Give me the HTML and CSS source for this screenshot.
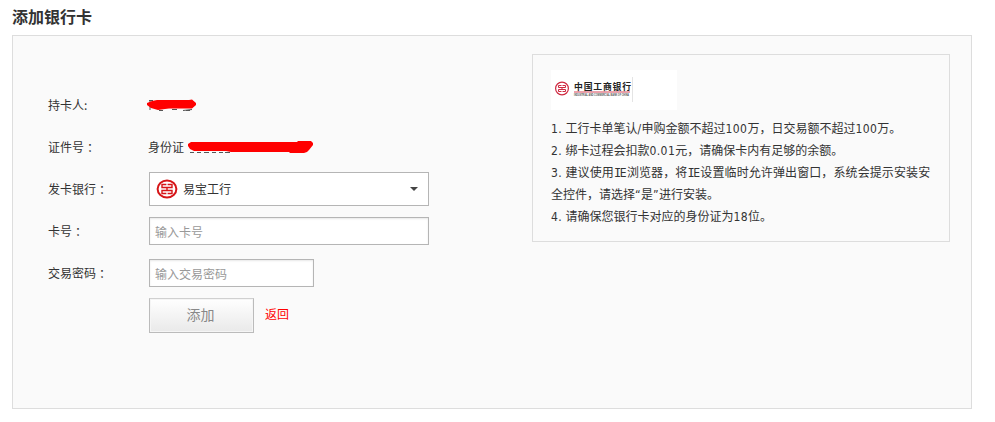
FILE: index.html
```html
<!DOCTYPE html>
<html lang="zh-CN">
<head>
<meta charset="utf-8">
<title>添加银行卡</title>
<link rel="stylesheet" href="styles.css">
</head>
<body>
<h1>添加银行卡</h1>
<main class="panel">
  <form class="form">
    <div class="row"><span class="label">持卡人:</span>
      <svg class="mask-name" width="50" height="14" viewBox="0 0 50 14"><path d="M2 2.500h4M3 3v9M35 2.500h7M36 12.500l9-1M39 12.500h4M12 12.500h4M25 11.500h5" stroke="#555" fill="none"/><path d="M5 3 10 2H42L45 1.500 49 5V7L45 10.500H22L18 11 11 12 4 10 0 7V5z" fill="#f00"/></svg>
    </div>
    <div class="row"><span class="label">证件号<i lang="zh-TW">：</i></span><span class="id">身份证</span>
      <svg class="mask-id" width="126" height="15" viewBox="0 0 126 15"><path d="M2 12.500h4M9 12.500h4M16 12.500h5M24 12.500h4M31 12.500h4M37 12.500h5" stroke="#555"/><path d="M3 2H109L110 1H123L125 3V5L121 10 119 12 116 13H102L101 12H43L38 11H6L2 9 0 6V4z" fill="#f00"/></svg>
    </div>
    <div class="row"><span class="label">发卡银行<i lang="zh-TW">：</i></span>
      <div class="select">
        <svg width="22" height="20" viewBox="0 0 22 20"><ellipse cx="11" cy="10" rx="9.400" ry="8.600" fill="#fff" stroke="#d61518" stroke-width="2"/><path d="M6 5.500H16M6 14.500H16M6 5v3.500H16V5M6 15v-3.500H16V15M11 8v4" fill="none" stroke="#d61518" stroke-width="1.400"/><path d="M11 4v3M11 13v3" stroke="#fff" stroke-width="1.200"/></svg>
        <span>易宝工行</span><b class="caret"></b>
      </div>
    </div>
    <div class="row"><span class="label">卡号<i lang="zh-TW">：</i></span><input class="field" type="text" placeholder="输入卡号"></div>
    <div class="row"><span class="label">交易密码<i lang="zh-TW">：</i></span><input class="field short" type="text" placeholder="输入交易密码"></div>
    <div class="row actions"><button type="button">添加</button><a>返回</a></div>
  </form>
  <aside class="tips">
    <div class="logo">
      <svg width="126" height="40" viewBox="0 0 126 40"><circle cx="11" cy="18.500" r="6.400" fill="none" stroke="#cf2940" stroke-width="1.200"/><path d="M7.500 15.500h7v2h-7zM7.500 19.500h7v2h-7zM11 17v3" fill="none" stroke="#cf2940"/><path d="M11 14.500v2M11 20.500v2" stroke="#fff"/><text class="bank" x="23" y="19.500" textLength="57">中国工商银行</text><path d="M23 22H79" stroke="#d84458"/><text class="bank-en" x="23" y="26" textLength="55" lengthAdjust="spacingAndGlyphs">INDUSTRIAL AND COMMERCIAL BANK OF CHINA</text><path d="M81.500 7v25" stroke="#e4e4e4"/></svg>
    </div>
    <p><span class="no">1.</span>工行卡单笔认<em>/</em>申购金额不超过<em>100</em>万，日交易额不超过<em>100</em>万。</p>
    <p><span class="no">2.</span>绑卡过程会扣款<em>0.01</em>元，请确保卡内有足够的余额。</p>
    <p><span class="no">3.</span><span class="full">建议使用<em><b>I</b>E</em>浏览器，将<em><b>I</b>E</em>设置临时允许弹出窗口，系统会提示安装安</span><br>全控件，请选择<em>“</em>是<em>”</em>进行安装。</p>
    <p><span class="no">4.</span>请确保您银行卡对应的身份证为<em>18</em>位。</p>
  </aside>
</main>
</body>
</html>
```
FILE: styles.css
```css
* { box-sizing: border-box; }
body { margin: 0; background: #fff; color: #333; font: 12px/22px "Noto Sans CJK SC", sans-serif; }
h1 { margin: 0 0 0 12px; height: 35px; padding-top: 5px; font-size: 16px; line-height: 22px; font-weight: 700; }
.panel { width: 960px; height: 374px; margin-left: 12px; padding: 18px 21px 0 35px; border: 1px solid #ddd; background: #fafafa; display: flex; justify-content: space-between; align-items: flex-start; }
.form { padding-top: 30px; width: 400px; }
.row { height: 42px; display: flex; align-items: center; }
.label { width: 101px; flex: none; }
.label i { display: inline-block; line-height: 20px; vertical-align: -1px; font-family: "Noto Sans CJK TC", sans-serif; font-style: normal; }
.row svg { display: block; }
.mask-name { margin-left: -2px; }
.id { margin-left: -1px; }
.mask-id { margin-left: 4px; }
.select { width: 280px; height: 34px; border: 1px solid #b5b5b5; background: #fff; display: flex; align-items: center; padding: 0 10px 0 6px; }
.select span { margin-left: 5px; }
.caret { margin-left: auto; border: 4px solid transparent; border-top-color: #444; border-bottom: 0; }
.field { width: 280px; height: 28px; margin: 0; padding: 0 5px; border: 1px solid #b5b5b5; border-radius: 0; background: #fff; box-shadow: inset 0 1px 2px #e8e8e8; font: inherit; color: #333; outline: 0; }
.short { width: 165px; }
.field::placeholder { color: #999; opacity: 1; }
.actions { padding-left: 101px; height: 43px; }
button { width: 105px; height: 35px; padding: 0 2px 4px 0; border: 1px solid #bbb; border-top-color: #d0d0d0; background: linear-gradient(#fff, #e9e9e9); box-shadow: inset 0 0 0 1px #f5f5f5; color: #888; font: 14px/22px "Noto Sans CJK SC", sans-serif; }
.actions a { margin: -4px 0 0 11px; color: #f00; }
.tips { width: 418px; height: 188px; border: 1px solid #ddd; padding: 15px 0 0 18px; white-space: nowrap; }
.logo { width: 126px; height: 40px; background: #fff; margin-bottom: 7px; }
.logo svg { display: block; }
.bank { font: 700 8.800px "Noto Sans CJK SC", sans-serif; fill: #222; }
.bank-en { font: 700 3px "Liberation Sans", sans-serif; fill: #555; }
.tips p { margin: 0; height: 22px; }
.tips p:nth-of-type(3) { height: 44px; }
.tips em, .no { font: 12px/1 "DejaVu Sans Condensed", "DejaVu Sans", sans-serif; font-stretch: condensed; letter-spacing: .4px; }
.tips em b { font: 12px/1 "DejaVu Sans Mono", monospace; letter-spacing: -1.500px; }
.full { letter-spacing: .1px; }
.no { display: inline-block; width: 14.500px; }
```
